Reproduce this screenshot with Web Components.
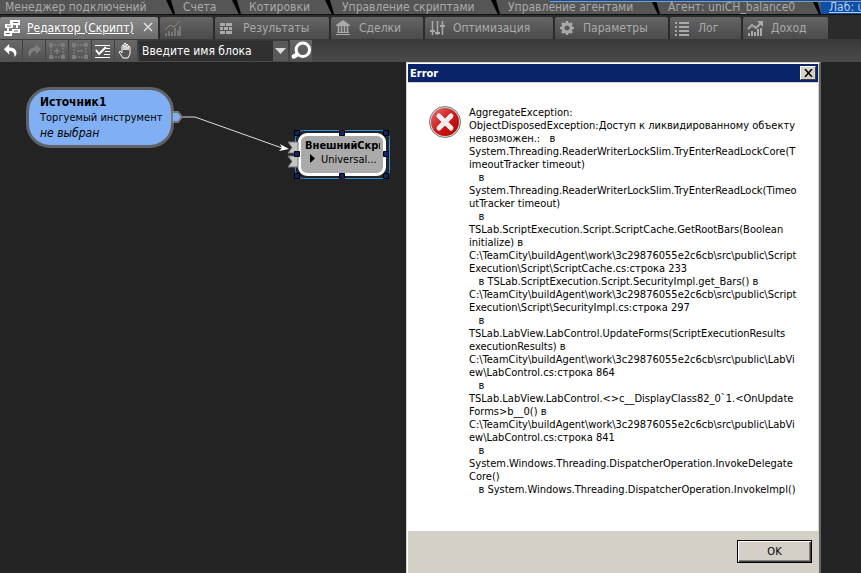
<!DOCTYPE html>
<html lang="ru">
<head>
<meta charset="utf-8">
<title>TSLab</title>
<style>
html,body{height:100%}
body{margin:0;overflow:hidden;background:#232323;font-family:"DejaVu Sans Condensed","DejaVu Sans",sans-serif;font-stretch:condensed}
</style>
</head>
<body>
<lab-app></lab-app>
<script>
const define=(name,html)=>customElements.define(name,class extends HTMLElement{
  constructor(){super();this.attachShadow({mode:'open'}).innerHTML=html;}
});

const ICONS={
  script:'<path d="M7 1h10v5H7zM2 5h8v4H2zM9 10h8v4H9zM1 12h8v5H1z" fill="#fff"/><path d="M10 3.500h5M4 7h4M11 12h4M3 14.500h4" stroke="#666"/><path d="M14 6v3M5 9v3" stroke="#fff" stroke-width="2" fill="none"/>',
  chart:'<path d="M2 17v-3M5 17v-5M8 17v-4M11 17V9M14 17v-6M16 17V7" stroke="#7f8488" stroke-width="1.5"/><path d="M1 11l5-5 4 2 6-6" stroke="#a08263" fill="none"/>',
  results:'<path d="M1 4h5v3H1zM7 4h6v3H7zM1 8h3v3H1zM5 8h4v3H5zM10 8h3v3h-3zM1 12h5v3H1zM7 12h6v3H7z" fill="#aaa"/>',
  bank:'<path d="M1 6l7-5 7 5v1H1zM2 13h12v1H2zM1 15h14v1H1z" fill="#aaa"/><path d="M3.500 7v6M6.500 7v6M9.500 7v6M12.500 7v6" stroke="#aaa" stroke-width="1.500"/>',
  sliders:'<path d="M3.500 2v14M8.500 2v14M13.500 2v14" stroke="#aaa" stroke-width="1.500"/><path d="M1 11h5v2H1zM6 13h5v2H6zM11 6h5v2h-5z" fill="#aaa"/>',
  gear:'<circle cx="8" cy="9" r="4" fill="none" stroke="#aaa" stroke-width="3"/><path d="M8 2v3M8 13v3M1 9h3M12 9h3M3 4l2 2M11 12l2 2M13 4l-2 2M5 12l-2 2" stroke="#aaa" stroke-width="2.500"/>',
  list:'<path d="M1 3h2v2H1zM5 3h10v2H5zM1 7h2v2H1zM5 7h10v2H5zM1 11h2v2H1zM5 11h10v2H5zM1 15h2v2H1zM5 15h10v2H5z" fill="#aaa"/>',
  income:'<path d="M2 17v-3M5 17v-5M8 17v-4M11 17v-7M14 17V9" stroke="#aaa" stroke-width="2"/><path d="M1 10l4-4 4 3 5-5" stroke="#aaa" stroke-width="2" fill="none"/><path d="M10 2h6v6z" fill="#aaa"/>',
  undo:'<path d="M7 1v4c6 0 9 3 8 8l-2 3c0-5-2-7-6-7v4L1 7z" fill="#fff"/>',
  redo:'<path d="M11 1v4c-6 0-9 3-8 8l2 3c0-5 2-7 6-7v4l6-6z" fill="#808080"/>',
  group:'<path d="M3 3h12v12H3z" fill="none" stroke="#8a8a8a" stroke-dasharray="2 1"/><path d="M1 1h4v4H1zM13 1h4v4h-4zM1 13h4v4H1zM13 13h4v4h-4z" fill="#7d7d7d"/><path d="M9 6v6M6 9h6" stroke="#8a8a8a"/>',
  ungroup:'<path d="M3 3h12v12H3z" fill="none" stroke="#8a8a8a" stroke-dasharray="2 1"/><path d="M1 1h4v4H1zM13 1h4v4h-4zM1 13h4v4H1zM13 13h4v4h-4z" fill="#7d7d7d"/><path d="M6 9h6" stroke="#8a8a8a"/>',
  check:'<path d="M1 3.500h15M12 6.500h4M11 9.500h5M10 12.500h6M1 15.500h15" stroke="#fff"/><path d="M2 8l3 4 7-7" stroke="#fff" stroke-width="2" fill="none"/>',
  hand:'<path d="M5 11V4q1-2 2 0v4-6q1-2 2 0v6-5q1-2 2 0v5-3q1-2 2 0v7l-2 4H6l-4-6q1-2 3 1z" fill="#555" stroke="#fff"/>',
  search:'<circle cx="10.500" cy="8" r="5.500" fill="none" stroke="#fff" stroke-width="2.500"/><path d="M5 12.500l-2 1" stroke="#fff" stroke-width="3.500" stroke-linecap="round"/>'
};
customElements.define('lab-icon',class extends HTMLElement{
  connectedCallback(){
    if(this.shadowRoot)return;
    const s=this.getAttribute('size')||18;
    this.attachShadow({mode:'open'}).innerHTML=`<style>:host{display:block;flex:none}svg{display:block}</style><svg width="${s}" height="${s}" viewBox="0 0 18 18" aria-hidden="true">${ICONS[this.getAttribute('name')]}</svg>`;
  }
});

define('window-tab',`<style>
:host{display:block;flex:none;height:14px;background:#555;position:relative}
button{all:unset;display:block;width:100%;height:14px;box-sizing:border-box;padding-left:8px;font-size:12px;line-height:12px;color:#aaa;white-space:nowrap}
:host([first]) button{padding-left:5px}
:host([active]){background:#0f4fa8}
:host([active]) button{color:#b8cdea;text-decoration:underline}
i{position:absolute;right:0;top:0;width:9px;height:14px;background:#000;clip-path:polygon(0 0,55% 0,100% 100%,75% 100%)}
:host([active]) i{display:none}
</style><button role="tab"><slot></slot></button><i></i>`);

define('lab-tab',`<style>
:host{display:block;flex:none;height:22px;background:linear-gradient(#656565,#4b4b4b);border-radius:2px 2px 0 0;color:#aaa}
button{all:unset;display:flex;align-items:center;gap:6px;width:100%;height:22px;box-sizing:border-box;padding-left:4px;font-size:12px;line-height:18px;white-space:nowrap}
:host([active]){background:linear-gradient(#8a8a8a,#6c6c6c);color:#fff}
:host([active]) .t{text-decoration:underline}
:host([active]) button{padding:0 5px 0 3px}
slot[name=end]{display:block;margin-left:auto}
</style><button role="tab"><slot name="icon"></slot><span class="t"><slot></slot></span><slot name="end"></slot></button>`);

define('tool-button',`<style>
:host{display:block;flex:none;width:22px;height:22px}
button{all:unset;display:grid;place-items:center;width:22px;height:22px;background:linear-gradient(#686868,#515151)}
</style><button><slot></slot></button>`);

define('lab-toolbar',`<style>
:host{display:flex;align-items:center;gap:1px;height:23px;background:linear-gradient(#393939,#4b4b4b)}
.combo{position:relative;flex:none;width:149px;height:20px;background:#303030;margin:0 1px}
select{all:unset;display:block;box-sizing:border-box;width:100%;height:20px;padding-left:3px;font-size:12px;line-height:20px;color:#fff;white-space:nowrap}
.arrow{position:absolute;right:0;top:0;width:15px;height:20px;background:#595959;display:grid;place-items:center;pointer-events:none}
</style>
<tool-button><lab-icon name="undo" size="16"></lab-icon></tool-button>
<tool-button><lab-icon name="redo" size="16"></lab-icon></tool-button>
<tool-button><lab-icon name="group"></lab-icon></tool-button>
<tool-button><lab-icon name="ungroup"></lab-icon></tool-button>
<tool-button><lab-icon name="check"></lab-icon></tool-button>
<tool-button><lab-icon name="hand"></lab-icon></tool-button>
<div class="combo"><select aria-label="Имя блока"><option>Введите имя блока</option></select><span class="arrow"><svg width="11" height="6"><path d="M0 0h11L5.500 6z" fill="#ddd"/></svg></span></div>
<tool-button><lab-icon name="search" size="22"></lab-icon></tool-button>`);

define('source-node',`<style>
:host{display:block;box-sizing:border-box;width:148px;border:3px solid #5f6266;border-radius:24px;background:#80b0f3;color:#000;padding:5px 0 4px 11px;font-size:11px;line-height:15px;white-space:nowrap}
b,span,em{display:block}b{font-size:12px}em{font-size:12px;line-height:16px}
</style><b><slot name="title"></slot></b><span><slot></slot></span><em><slot name="value"></slot></em>`);

define('script-node',`<style>
:host{display:block;position:relative;width:91px;height:43px}
.box{box-sizing:border-box;width:88px;height:43px;margin:0 1px;border:3px solid #fff;border-radius:9px;background:#aaa;padding:3px 3px 3px 4px;font-size:11px;line-height:14px;white-space:nowrap;color:#000}
b,span{display:block;overflow:hidden}
span{padding-left:5px}
.mark{margin-right:5px}
.frame{position:absolute;left:-12px;top:-4px}
</style><div class="box"><b><slot name="title"></slot></b><span><svg class="mark" width="6" height="9"><path d="M0 0l5 4.500-5 4.500z"/></svg><slot></slot></span></div>
<svg class="frame" width="110" height="56"><rect x="10.500" y="1.500" width="94" height="48" rx="8" fill="none" stroke="#2a8ee8"/>
<g fill="#c4c4c4" stroke="#777"><path d="M3 13h10v11H3l4-5.500zM3 27h10v11H3l4-5.500z"/></g>
<g fill="#0b246a" stroke="#000"><path d="M9.500 1.500h5v5h-5zM54.500 1.500h5v5h-5zM98.500 1.500h5v5h-5zM9.500 22.500h5v5h-5zM98.500 22.500h5v5h-5zM9.500 44.500h5v5h-5zM54.500 44.500h5v5h-5zM98.500 44.500h5v5h-5z"/></g></svg>`);

define('script-canvas',`<style>
:host{display:block;position:relative;flex:1;background:#232323;overflow:hidden}
.wire{position:absolute;left:0;top:0}
source-node{position:absolute;left:26px;top:25px}
script-node{position:absolute;left:297px;top:71px}
</style>
<source-node><span slot="title">Источник1</span>Торгуемый инструмент<span slot="value">не выбран</span></source-node>
<script-node><span slot="title">ВнешнийСкри</span>Universal...</script-node>
<svg class="wire" width="300" height="120"><path d="M172 50h6l4 5-4 5h-6z" fill="#80b0f3" stroke="#777" stroke-width="2"/><path d="M183 55h12l87 31" fill="none" stroke="#ddd"/><path d="M280 82l9 5-10 2 3-3z" fill="#fff"/></svg>`);

define('error-dialog',`<style>
:host{display:flex;flex-direction:column;box-sizing:border-box;background:#d4d0c8;border:1px solid #d4d0c8;border-right:2px solid #666;box-shadow:inset 1px 1px #fff;padding:1px 1px 0 1px;color:#000;font-size:11px}
header{display:flex;align-items:center;justify-content:space-between;height:18px;flex:none;background:#0a246a;color:#fff;font-weight:bold;padding:0 2px;margin-bottom:1px}
header button{all:unset;box-sizing:border-box;width:16px;height:14px;background:#d4d0c8;border:1px solid;border-color:#fff #404040 #404040 #fff;display:grid;place-items:center}
main{display:flex;gap:7px;align-items:flex-start;background:#fff;padding:22px 20px 35px 20px}
main svg{flex:none}
p{margin:1px 0 0;font-size:11px;line-height:13px;white-space:pre}
footer{display:flex;justify-content:flex-end;padding:9px 6px 40px}
footer button{all:unset;box-sizing:border-box;width:75px;height:23px;text-align:center;line-height:19px;background:#d4d0c8;border:1px solid #000;box-shadow:inset 1px 1px #fff,inset -1px -1px #404040,inset -2px -2px #808080}
</style>
<header><span><slot name="title"></slot></span><button aria-label="Закрыть"><svg width="9" height="8"><path d="M1 0l7 8M8 0L1 8" stroke="#000" stroke-width="1.500"/></svg></button></header>
<main><svg width="34" height="34" viewBox="0 0 34 34"><defs><linearGradient id="r" x2="1" y2="1"><stop stop-color="#e67070"/><stop offset=".5" stop-color="#cc1a1a"/><stop offset="1" stop-color="#b50000"/></linearGradient></defs><circle cx="17" cy="17" r="15.500" fill="#ddd" stroke="#777"/><circle cx="17" cy="17" r="14" fill="url(#r)"/><path d="M11 11l12 12M23 11L11 23" stroke="#eee" stroke-width="5" stroke-linecap="round"/></svg><p><slot></slot></p></main>
<footer><button>OK</button></footer>`);

define('lab-app',`<style>
:host{display:flex;flex-direction:column;height:100vh;position:relative;overflow:hidden;background:#2b2b2b}
nav{display:flex;flex:none}
.top{height:14px;border-bottom:1px solid #111;position:relative}
.top::after{content:"";position:absolute;left:550px;right:0;top:0;height:1px;background:#1a4a90;border-bottom:1px solid #7a9cc8}
.second{gap:2px;padding-top:2px;height:22px}
error-dialog{position:absolute;left:406px;top:62px;width:415px}
</style>
<nav class="top" role="tablist"></nav>
<nav class="second" role="tablist"></nav>
<lab-toolbar></lab-toolbar>
<script-canvas></script-canvas>
<error-dialog><span slot="title">Error</span></error-dialog>`);

const root=document.querySelector('lab-app').shadowRoot;
root.querySelector('.top').innerHTML=[['Менеджер подключений',175],['Счета',66],['Котировки',93],['Управление скриптами',166],['Управление агентами',160],['Агент: uniCH_balance0',161],['Лаб: u',40]]
 .map(([t,w],i)=>`<window-tab ${i==0?'first':''} ${i==6?'active':''} style="width:${w}px;${i==6?'flex:1':''}">${t}</window-tab>`).join('');
root.querySelector('.second').innerHTML=[['script','Редактор (Скрипт)',158],['chart','',53],['results','Результаты',114],['bank','Сделки',92],['sliders','Оптимизация',128],['gear','Параметры',113],['list','Лог',71],['income','Доход',85]]
 .map(([n,t,w],i)=>`<lab-tab ${i==0?'active':''} style="width:${w}px"><lab-icon slot="icon" name="${n}"></lab-icon>${t}${i==0?'<svg slot="end" width="10" height="10"><path d="M1 1l8 8M9 1L1 9" stroke="#ddd" stroke-width="1.500"/></svg>':''}</lab-tab>`).join('');
root.querySelector('error-dialog').append(`AggregateException:
ObjectDisposedException:Доступ к ликвидированному объекту
невозможен.:   в
System.Threading.ReaderWriterLockSlim.TryEnterReadLockCore(T
imeoutTracker timeout)
   в
System.Threading.ReaderWriterLockSlim.TryEnterReadLock(Timeo
utTracker timeout)
   в
TSLab.ScriptExecution.Script.ScriptCache.GetRootBars(Boolean
initialize) в
C:\\TeamCity\\buildAgent\\work\\3c29876055e2c6cb\\src\\public\\Script
Execution\\Script\\ScriptCache.cs:строка 233
   в TSLab.ScriptExecution.Script.SecurityImpl.get_Bars() в
C:\\TeamCity\\buildAgent\\work\\3c29876055e2c6cb\\src\\public\\Script
Execution\\Script\\SecurityImpl.cs:строка 297
   в
TSLab.LabView.LabControl.UpdateForms(ScriptExecutionResults
executionResults) в
C:\\TeamCity\\buildAgent\\work\\3c29876055e2c6cb\\src\\public\\LabVi
ew\\LabControl.cs:строка 864
   в
TSLab.LabView.LabControl.<>c__DisplayClass82_0\`1.<OnUpdate
Forms>b__0() в
C:\\TeamCity\\buildAgent\\work\\3c29876055e2c6cb\\src\\public\\LabVi
ew\\LabControl.cs:строка 841
   в
System.Windows.Threading.DispatcherOperation.InvokeDelegate
Core()
   в System.Windows.Threading.DispatcherOperation.InvokeImpl()`);
</script>
</body>
</html>
